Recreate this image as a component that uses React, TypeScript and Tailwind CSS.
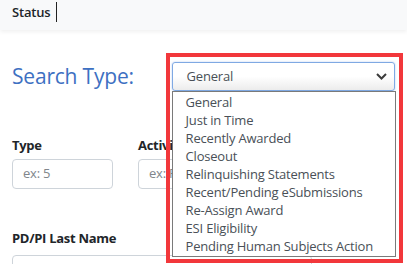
import React from "react";

const options = [
  "General",
  "Just in Time",
  "Recently Awarded",
  "Closeout",
  "Relinquishing Statements",
  "Recent/Pending eSubmissions",
  "Re-Assign Award",
  "ESI Eligibility",
  "Pending Human Subjects Action",
];

function Chevron() {
  return (
    <svg width="11" height="7" viewBox="0 0 11 7" fill="none">
      <path d="M1 1l4.5 4.5L10 1" stroke="#3c3c3c" strokeWidth="2" />
    </svg>
  );
}

function SearchTypeSelect() {
  return (
    <div className="relative w-[224px]">
      <div className="flex h-[29px] items-center justify-between rounded-[3px] border border-[#7fa9e3] bg-gradient-to-b from-white via-white to-[#ececec] pl-[14px] pr-[7px] text-[13px] tracking-[-0.2px] text-[#495057] shadow-[0_0_2px_rgba(100,150,230,0.5)]">
        <span>General</span>
        <Chevron />
      </div>
      <ul className="absolute left-0 top-[29px] z-10 w-[224px] border border-[#7a7a7a] bg-white py-[1px]">
        {options.map((option) => (
          <li
            key={option}
            className="h-[18px] pl-[13px] text-[13px] leading-[18px] tracking-[-0.2px] whitespace-nowrap text-[#495057]"
          >
            {option}
          </li>
        ))}
      </ul>
      <div className="pointer-events-none absolute left-[-6px] top-[-9px] z-20 h-[210px] w-[237px] border-4 border-[#f2373b]" />
    </div>
  );
}

function Field({ label, placeholder, width }: { label: string; placeholder?: string; width: string }) {
  return (
    <div className={width}>
      <p className="text-[13px] font-bold leading-[21px] tracking-[-0.3px] whitespace-nowrap text-[#212529]">{label}</p>
      <div className="mt-[3px] flex h-[30px] items-center rounded-[4px] border border-[#ced4da] bg-white px-[10px] text-[13px] tracking-[-0.2px] text-[#80868c]">
        {placeholder}
      </div>
    </div>
  );
}

export default function App() {
  return (
    <div className="h-[264px] w-[407px] overflow-hidden bg-white font-['Open_Sans',sans-serif]">
      <div className="flex h-[30px] items-start bg-[#f8f9fa] px-3 shadow-[0_2px_4px_rgba(0,0,0,0.06)]">
        <span className="mt-[2px] border-r border-[#222] pr-[6px] text-[13px] leading-[20px] font-semibold tracking-[-0.2px] text-[#212529]">
          Status
        </span>
      </div>

      <main className="px-3">
        <div className="mt-[32px] flex items-center">
          <h2 className="w-[160px] text-[21px] leading-[29px] tracking-[-0.2px] text-[#3d70c2]">Search Type:</h2>
          <SearchTypeSelect />
        </div>

        <div className="mt-[44px] flex gap-[25px]">
          <Field label="Type" placeholder="ex: 5" width="w-[101px]" />
          <Field label="Activity Code" placeholder="ex: R01" width="w-[101px]" />
        </div>

        <div className="mt-[39px] w-[300px]">
          <p className="text-[13px] font-bold leading-[21px] tracking-[-0.3px] text-[#212529]">PD/PI Last Name</p>
          <div className="mt-[6px] h-[30px] rounded-[4px] border border-[#ced4da]" />
        </div>
      </main>
    </div>
  );
}
